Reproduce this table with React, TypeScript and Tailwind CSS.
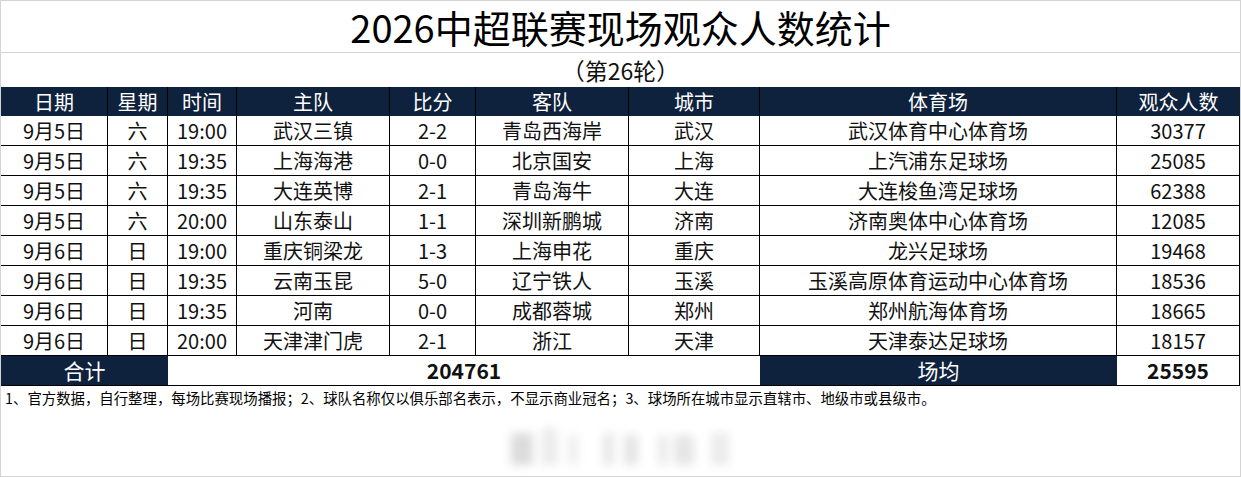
import React from "react"

const rows: string[][] = [
  ["9月5日", "六", "19:00", "武汉三镇", "2-2", "青岛西海岸", "武汉", "武汉体育中心体育场", "30377"],
  ["9月5日", "六", "19:35", "上海海港", "0-0", "北京国安", "上海", "上汽浦东足球场", "25085"],
  ["9月5日", "六", "19:35", "大连英博", "2-1", "青岛海牛", "大连", "大连梭鱼湾足球场", "62388"],
  ["9月5日", "六", "20:00", "山东泰山", "1-1", "深圳新鹏城", "济南", "济南奥体中心体育场", "12085"],
  ["9月6日", "日", "19:00", "重庆铜梁龙", "1-3", "上海申花", "重庆", "龙兴足球场", "19468"],
  ["9月6日", "日", "19:35", "云南玉昆", "5-0", "辽宁铁人", "玉溪", "玉溪高原体育运动中心体育场", "18536"],
  ["9月6日", "日", "19:35", "河南", "0-0", "成都蓉城", "郑州", "郑州航海体育场", "18665"],
  ["9月6日", "日", "20:00", "天津津门虎", "2-1", "浙江", "天津", "天津泰达足球场", "18157"],
]

const headers = ["日期", "星期", "时间", "主队", "比分", "客队", "城市", "体育场", "观众人数"]

const cols = "grid grid-cols-[107px_60px_69px_153px_86px_153px_131px_357px_123px]"

export default function App() {
  return (
    <div className="w-[1241px] h-[477px] bg-white border border-[#d4d4d4] flex flex-col text-[#111] font-['Noto_Sans_CJK_SC','Noto_Sans',sans-serif]">
      {/* title */}
      <div className="h-[52px] shrink-0 border-b border-[#d4d4d4] flex items-center justify-center text-[38px] leading-[50px] font-normal text-black">
        2026中超联赛现场观众人数统计
      </div>
      <div className="h-[34px] shrink-0 flex items-center justify-center text-[23px] leading-[34px]">
        （第26轮）
      </div>

      {/* table */}
      <div className={`${cols} h-[29px] shrink-0 bg-[#0f223d] text-white text-[20px] leading-none`}>
        {headers.map((h) => (
          <div key={h} className="flex items-center justify-center border-r border-black last:border-r-0">
            {h}
          </div>
        ))}
      </div>
      {rows.map((r, i) => (
        <div key={i} className={`${cols} h-[30px] shrink-0 border-b border-black text-[20px] leading-none`}>
          {r.map((c, j) => (
            <div key={j} className="flex items-center justify-center border-r border-black">
              {c}
            </div>
          ))}
        </div>
      ))}
      <div className={`${cols} h-[30px] shrink-0 border-b border-black text-[21px] leading-none`}>
        <div className="col-span-2 bg-[#0f223d] text-white flex items-center justify-center">合计</div>
        <div className="col-span-5 flex items-center justify-center font-semibold">204761</div>
        <div className="bg-[#0f223d] text-white flex items-center justify-center">场均</div>
        <div className="flex items-center justify-center font-semibold border-r border-black">25595</div>
      </div>

      {/* notes */}
      <div className="h-[24px] shrink-0 pl-[4px] flex items-center text-[14.4px] leading-none text-black">
        1、官方数据，自行整理，每场比赛现场播报；2、球队名称仅以俱乐部名表示，不显示商业冠名；3、球场所在城市显示直辖市、地级市或县级市。
      </div>

      {/* blurred watermark */}
      <div className="mt-[15px] flex justify-center">
        <div className="w-[220px] h-[40px] flex items-end">
          <div className="w-[22px] h-[32px] bg-[#c4c4c4] blur-[5px] opacity-60" />
          <div className="ml-[8px] w-[17px] h-[38px] rounded-t-full bg-[#dadada] blur-[4px] opacity-50" />
          <div className="ml-[10px] w-[10px] h-[30px] bg-[#dedede] blur-[5px] opacity-50" />
          <div className="ml-[25px] w-[11px] h-[32px] bg-[#d0d0d0] blur-[5px] opacity-50" />
          <div className="ml-[10px] w-[14px] h-[30px] bg-[#cacaca] blur-[5px] opacity-50" />
          <div className="ml-[20px] w-[10px] h-[30px] bg-[#d6d6d6] blur-[5px] opacity-50" />
          <div className="ml-[6px] w-[20px] h-[30px] bg-[#cdcdcd] blur-[5px] opacity-50" />
          <div className="ml-[17px] w-[18px] h-[32px] bg-[#d8d8d8] blur-[5px] opacity-50" />
        </div>
      </div>
    </div>
  )
}
